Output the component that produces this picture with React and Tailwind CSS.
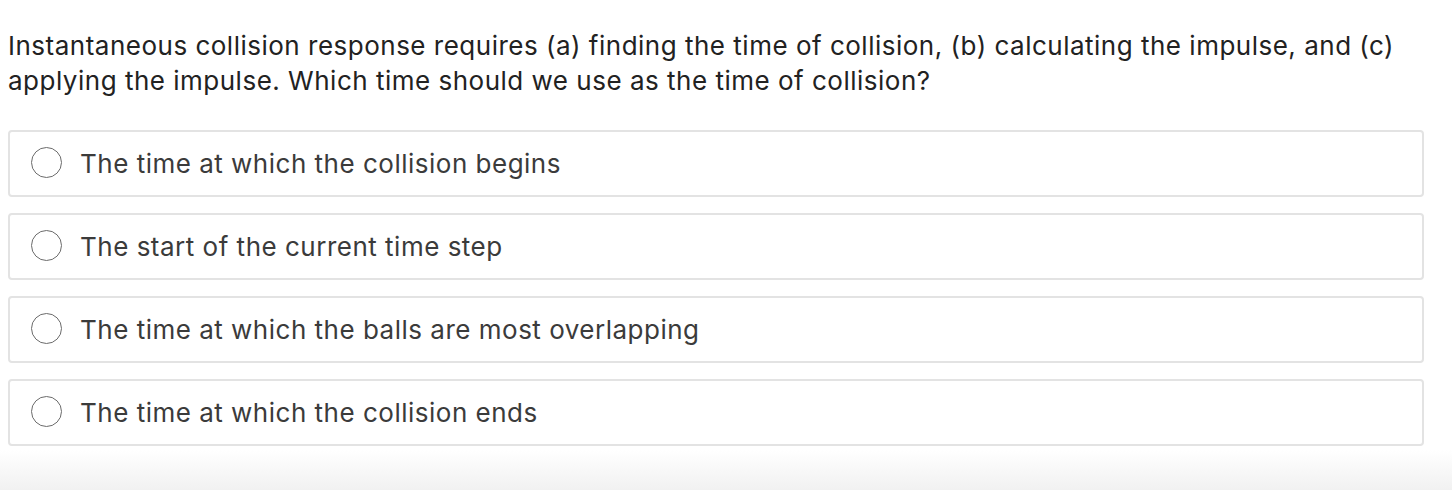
import React from 'react';

const options = [
  'The time at which the collision begins',
  'The start of the current time step',
  'The time at which the balls are most overlapping',
  'The time at which the collision ends',
];

const App = () => {
  return (
    <div className="w-[1452px] h-[490px] overflow-hidden bg-white flex flex-col font-['Inter',sans-serif]">
      <div className="px-2 pt-[28px]">
        <p className="text-[26px] leading-[35px] text-[#222222] tracking-[0.5px]">
          Instantaneous collision response requires (a) finding the time of collision, (b) calculating the impulse, and (c)
          applying the impulse. Which time should we use as the time of collision?
        </p>

        {/* Answer choices */}
        <div className="mt-[32px] w-[1416px] flex flex-col gap-4">
          {options.map((opt) => (
            <label
              key={opt}
              className="h-[67px] flex items-center border-2 border-[#e3e3e3] rounded-[4px] pl-[21px] cursor-pointer"
            >
              <span className="w-[31px] h-[31px] rounded-full border-[1.5px] border-[#6b6b6b] shrink-0 -mt-[3px]" />
              <span className="ml-[18px] text-[26px] text-[#3b3b3b] tracking-[0.5px]">{opt}</span>
            </label>
          ))}
        </div>
      </div>
      <div className="mt-auto h-[40px] bg-gradient-to-b from-white to-[#f1f1f1]" />
    </div>
  );
};

export default App;
